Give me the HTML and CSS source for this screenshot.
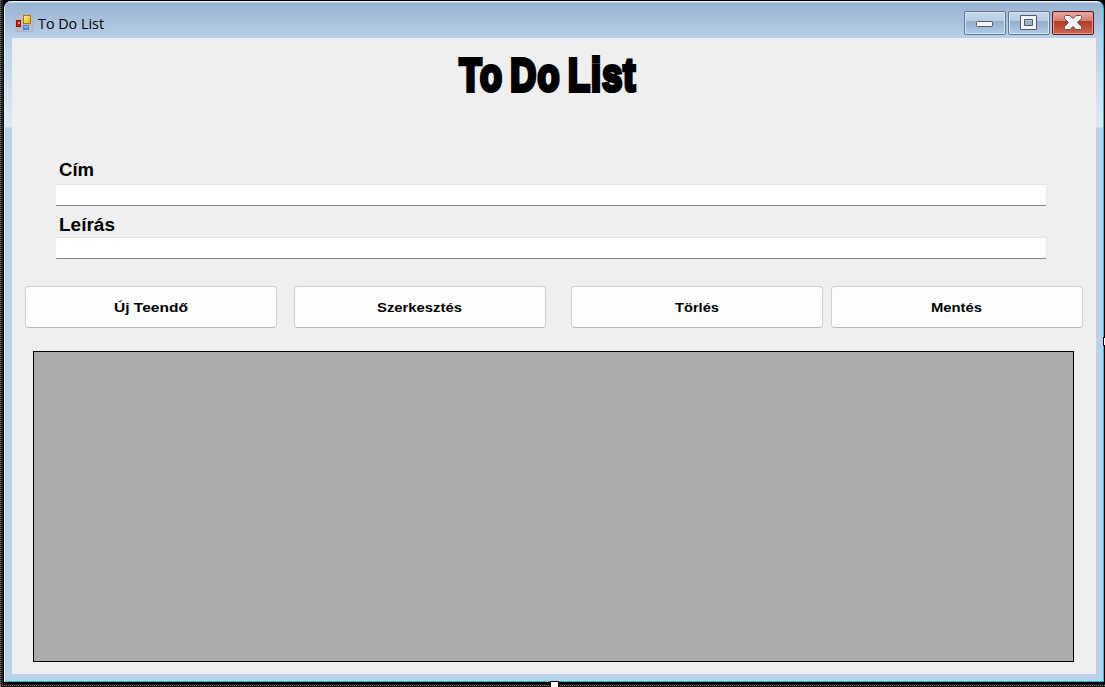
FILE: index.html
```html
<!DOCTYPE html>
<html lang="hu">
<head>
<meta charset="utf-8">
<title>To Do List</title>
<link rel="stylesheet" href="styles.css">
</head>
<body>
<div class="designer">
  <div class="window">
    <header class="titlebar">
      <svg class="app-icon" width="17" height="18" viewBox="0 0 17 18">
        <defs>
          <linearGradient id="gold" x2="1" y2="1"><stop offset="0" stop-color="#fff6a0"/><stop offset="1" stop-color="#e8a800"/></linearGradient>
          <linearGradient id="blue" x2="0" y2="1"><stop offset="0" stop-color="#a4cdfb"/><stop offset="1" stop-color="#3772dc"/></linearGradient>
        </defs>
        <path d="M0 .5h17v17H0zM7.500 1v16M1 5.500h6M1 13.500h6M8 11h9" fill="#b8bfc8" stroke="#a9b5c2"/>
        <rect x=".5" y="6.500" width="4" height="6" fill="#c51d0c" stroke="#9b1106"/>
        <rect x="2" y="8" width="2" height="2" fill="#f28c72"/>
        <rect x="7.500" y="1.500" width="7" height="8" fill="url(#gold)" stroke="#ad7900"/>
        <rect x="7.500" y="11.500" width="5" height="4" fill="url(#blue)" stroke="#5382c6"/>
      </svg>
      <svg class="caption" width="70" height="20"><text x="0" y="15" textLength="66" lengthAdjust="spacingAndGlyphs">To Do List</text></svg>
      <div class="controls">
        <div class="control"><svg width="40" height="22"><rect x="11.500" y="9.500" width="16" height="5" rx="1" fill="#f4f4f4" stroke="#535969"/></svg></div>
        <div class="control"><svg width="40" height="22"><path fill-rule="evenodd" d="M11.500 3.500h16v14h-16zM15.500 7.500v6h8v-6z" fill="#f2f2f2" stroke="#535969"/></svg></div>
        <div class="control close"><svg width="40" height="22"><path d="M11.500 4.500l1-1h4.500l3 3 3-3h4.500l1 1v2l-4 4 4 4v2l-1 1H23l-3-3-3 3h-4.500l-1-1v-2l4-4-4-4z" fill="#f3f3f3" stroke="#535363"/></svg></div>
      </div>
    </header>
    <main class="client">
      <h1 class="heading"><svg width="300" height="80"><text x="4.500" y="53" textLength="177" lengthAdjust="spacingAndGlyphs">To Do List</text></svg></h1>
      <section class="fields">
        <label class="label" for="title"><svg width="80" height="24"><text x="3" y="17" textLength="35" lengthAdjust="spacingAndGlyphs">Cím</text></svg></label>
        <input class="field" id="title">
        <label class="label second" for="description"><svg width="80" height="24"><text x="3" y="18" textLength="56" lengthAdjust="spacingAndGlyphs">Leírás</text></svg></label>
        <input class="field" id="description">
      </section>
      <div class="actions">
        <button class="action"><svg width="74" height="20"><text x="0" y="15" textLength="74" lengthAdjust="spacingAndGlyphs">Új Teendő</text></svg></button>
        <button class="action"><svg width="86" height="20"><text x="0" y="15" textLength="85" lengthAdjust="spacingAndGlyphs">Szerkesztés</text></svg></button>
        <button class="action"><svg width="44" height="20"><text x="0" y="15" textLength="44" lengthAdjust="spacingAndGlyphs">Törlés</text></svg></button>
        <button class="action"><svg width="52" height="20"><text x="0" y="15" textLength="51" lengthAdjust="spacingAndGlyphs">Mentés</text></svg></button>
      </div>
      <div class="grid"></div>
    </main>
  </div>
  <i class="handle bottom"></i>
  <i class="handle right"></i>
</div>
</body>
</html>
```
FILE: styles.css
```css
* { box-sizing: border-box; }
body { margin: 0; overflow: hidden; }
svg { display: block; flex: none; overflow: visible; }
.designer {
  position: relative;
  width: 1105px;
  height: 687px;
  padding: 1px 0 0 4px;
  background:
    repeating-linear-gradient(90deg, #777 0 1px, transparent 1px 2px) 0 685px / 100% 1px no-repeat,
    repeating-linear-gradient(#777 0 1px, transparent 1px 2px) 0 0 / 1px 100% no-repeat,
    linear-gradient(#181818, #181818) 0 684px / 100% 3px no-repeat,
    linear-gradient(90deg, #252525 0 3px, #000 3px);
}
.window {
  width: 1100px;
  height: 681px;
  padding: 0 7px 7px;
  border-left: 1px solid #e8f2fb;
  border-right: 1px solid #25bdd8;
  border-bottom: 1px solid #25bdd8;
  border-radius: 7px 7px 0 0;
  background: linear-gradient(#e5f0fa 0 1px, #98b4d2 2px, #a7bfdb 18px, #b9d1ea 38px, #dce9f6 126px, #b9d1ea 127px);
}
.titlebar { display: flex; height: 37px; padding: 10px 2px 0 4px; }
.app-icon { margin-top: 3px; }
.caption { margin: 3px 0 0 5px; font: 15px "Open Sans", sans-serif; fill: #000; }
.controls { display: flex; gap: 2px; margin-left: auto; }
.control {
  width: 42px;
  height: 24px;
  border: 1px solid #65778e;
  border-radius: 2px;
  background: linear-gradient(#c5d8eb, #b6cce2 42%, #94aecb 43%, #b0cce8);
  box-shadow: inset 0 0 0 1px #d2e3f2;
}
.close {
  border-color: #561c20;
  background: linear-gradient(#e8aea2, #d27b6c 42%, #b33c27 43%, #cf6551);
  box-shadow: inset 0 0 0 1px #e59b8d;
}
.client { height: 636px; background: #efefef; padding: 0 22px 0 13px; }
.heading { height: 120px; margin: 0; padding-left: 430px; }
.heading text { font: bold 46px "Liberation Sans", Arial, sans-serif; letter-spacing: 1.5px; word-spacing: -5px; stroke: #000; stroke-width: 4px; }
.fields { display: flex; flex-direction: column; padding-left: 31px; }
.label { height: 26px; padding-top: 1px; font: bold 18px "Liberation Sans", Arial, sans-serif; }
.second { height: 31px; padding-top: 7px; }
.field {
  width: 991px;
  height: 22px;
  padding: 0 4px;
  border: solid #e5e5e5;
  border-width: 1px 1px 1px 0;
  border-bottom-color: #858585;
  border-radius: 1px;
  background: #fff;
  outline: 0;
}
.actions { display: grid; grid-template-columns: 252px 252px 252px 252px; column-gap: 17px; width: 1058px; margin-top: 27px; }
.action:nth-child(3) { margin-left: 8px; margin-right: -8px; }
.action:nth-child(4) { margin-left: -1px; margin-right: 1px; }
.action {
  display: flex;
  align-items: center;
  justify-content: center;
  height: 42px;
  padding: 0;
  border: 1px solid #d0d0d0;
  border-bottom-color: #b8b8b8;
  border-radius: 4px;
  background: #fdfdfd;
  font: bold 13.5px "Liberation Sans", Arial, sans-serif;
}
.grid { width: 1041px; height: 311px; margin: 23px 0 0 8px; border: 1px solid #000; background: #ababab; }
.handle { position: absolute; background: #fff; border: 1px solid #000; }
.bottom { left: 550px; top: 681px; width: 9px; height: 8px; }
.right { left: 1103px; top: 337px; width: 9px; height: 9px; }
```
